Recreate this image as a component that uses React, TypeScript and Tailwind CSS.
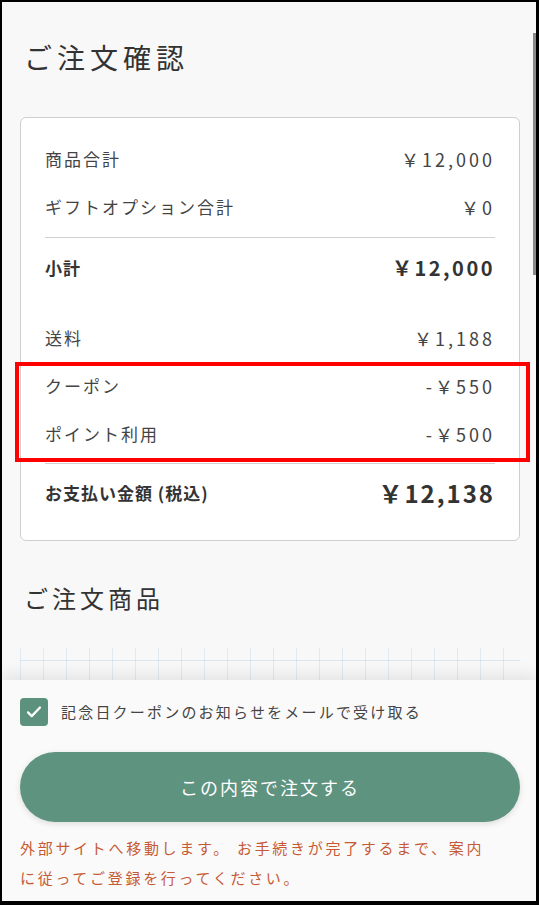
import React from "react";

const font = "font-['Noto_Sans_CJK_JP','Noto_Sans',sans-serif]";

function Row({ label, value, bold = false, big = false }: { label: string; value: string; bold?: boolean; big?: boolean }) {
  return (
    <div className="flex h-12 items-center justify-between">
      <span className={bold ? "text-[17px] font-bold tracking-[1px] text-[#333]" : "text-[17px] tracking-[2px] text-[#444]"}>{label}</span>
      <span
        className={
          big
            ? "text-[24px] font-bold tracking-[2px] text-[#333]"
            : bold
            ? "text-[20px] font-bold tracking-[2.5px] text-[#333]"
            : "text-[18px] tracking-[3px] text-[#444]"
        }
      >
        {value}
      </span>
    </div>
  );
}

export default function App() {
  return (
    <div className={`relative h-[905px] w-[539px] overflow-hidden border-2 border-r-[3px] border-b-[4px] border-black bg-[#f8f8f8] ${font}`}>
      <div className="flex h-full flex-col">
        <h1 className="mt-[35px] ml-[22px] text-[28px] leading-[40px] tracking-[5px] text-[#333]">ご注文確認</h1>

        <div className="mt-[40px] mr-[16px] ml-[18px] rounded-md border border-[#cfcfcf] bg-white px-6 pt-[17px] pb-[23px]">
          <Row label="商品合計" value="￥12,000" />
          <Row label="ギフトオプション合計" value="￥0" />
          <div className="mt-[6px] h-px bg-[#d0d0d0]" />
          <div className="mt-[6px]">
            <Row label="小計" value="￥12,000" bold />
          </div>
          <div className="mt-[22px]">
            <Row label="送料" value="￥1,188" />
            <Row label="クーポン" value="-￥550" />
            <Row label="ポイント利用" value="-￥500" />
          </div>
          <div className="mt-[5px] h-px bg-[#d0d0d0]" />
          <div className="mt-[5px]">
            <Row label="お支払い金額 (税込)" value="￥12,138" bold big />
          </div>
        </div>

        <h2 className="mt-[39px] ml-[22px] text-[24px] leading-[36px] tracking-[4px] text-[#333]">ご注文商品</h2>

        <div className="mt-[32px] mr-[16px] ml-[18px] h-[32px] bg-[linear-gradient(90deg,rgba(150,190,220,0.25)_1px,transparent_1px),linear-gradient(180deg,transparent_12px,rgba(150,190,220,0.3)_12px,rgba(150,190,220,0.3)_13px,transparent_13px)] bg-[length:23px_32px]" />

        <div className="relative flex flex-1 flex-col bg-[#fafafa] pt-[18px] pr-[16px] pl-[18px] shadow-[0_-6px_14px_rgba(0,0,0,0.08)]">
          <div className="flex items-center gap-[13px]">
            <div className="flex h-[28px] w-[28px] items-center justify-center rounded-[4px] bg-[#5b917d]">
              <svg width="18" height="18" viewBox="0 0 24 24" fill="none" stroke="white" strokeWidth="3" strokeLinecap="round" strokeLinejoin="round">
                <path d="M4 12.5l5 5L20 6" />
              </svg>
            </div>
            <span className="text-[15px] tracking-[2.2px] text-[#444]">記念日クーポンのお知らせをメールで受け取る</span>
          </div>

          <button className="mt-[26px] h-[70px] w-full rounded-full bg-[#5e9380] text-[18px] tracking-[2px] text-white shadow-[0_2px_6px_rgba(0,0,0,0.12)]">
            この内容で注文する
          </button>

          <p className="mt-[11px] text-[15px] leading-[30px] tracking-[2.7px] text-[#c65a36]">
            外部サイトへ移動します。 お手続きが完了するまで、案内
            <br />
            に従ってご登録を行ってください。
          </p>
        </div>
      </div>

      <div className="absolute top-[31px] right-[0px] h-[242px] w-[3px] bg-[#8a8a8a]" />
      <div className="absolute top-[360px] left-[13px] h-[100px] w-[515px] border-4 border-[#ff0000]" />
    </div>
  );
}
